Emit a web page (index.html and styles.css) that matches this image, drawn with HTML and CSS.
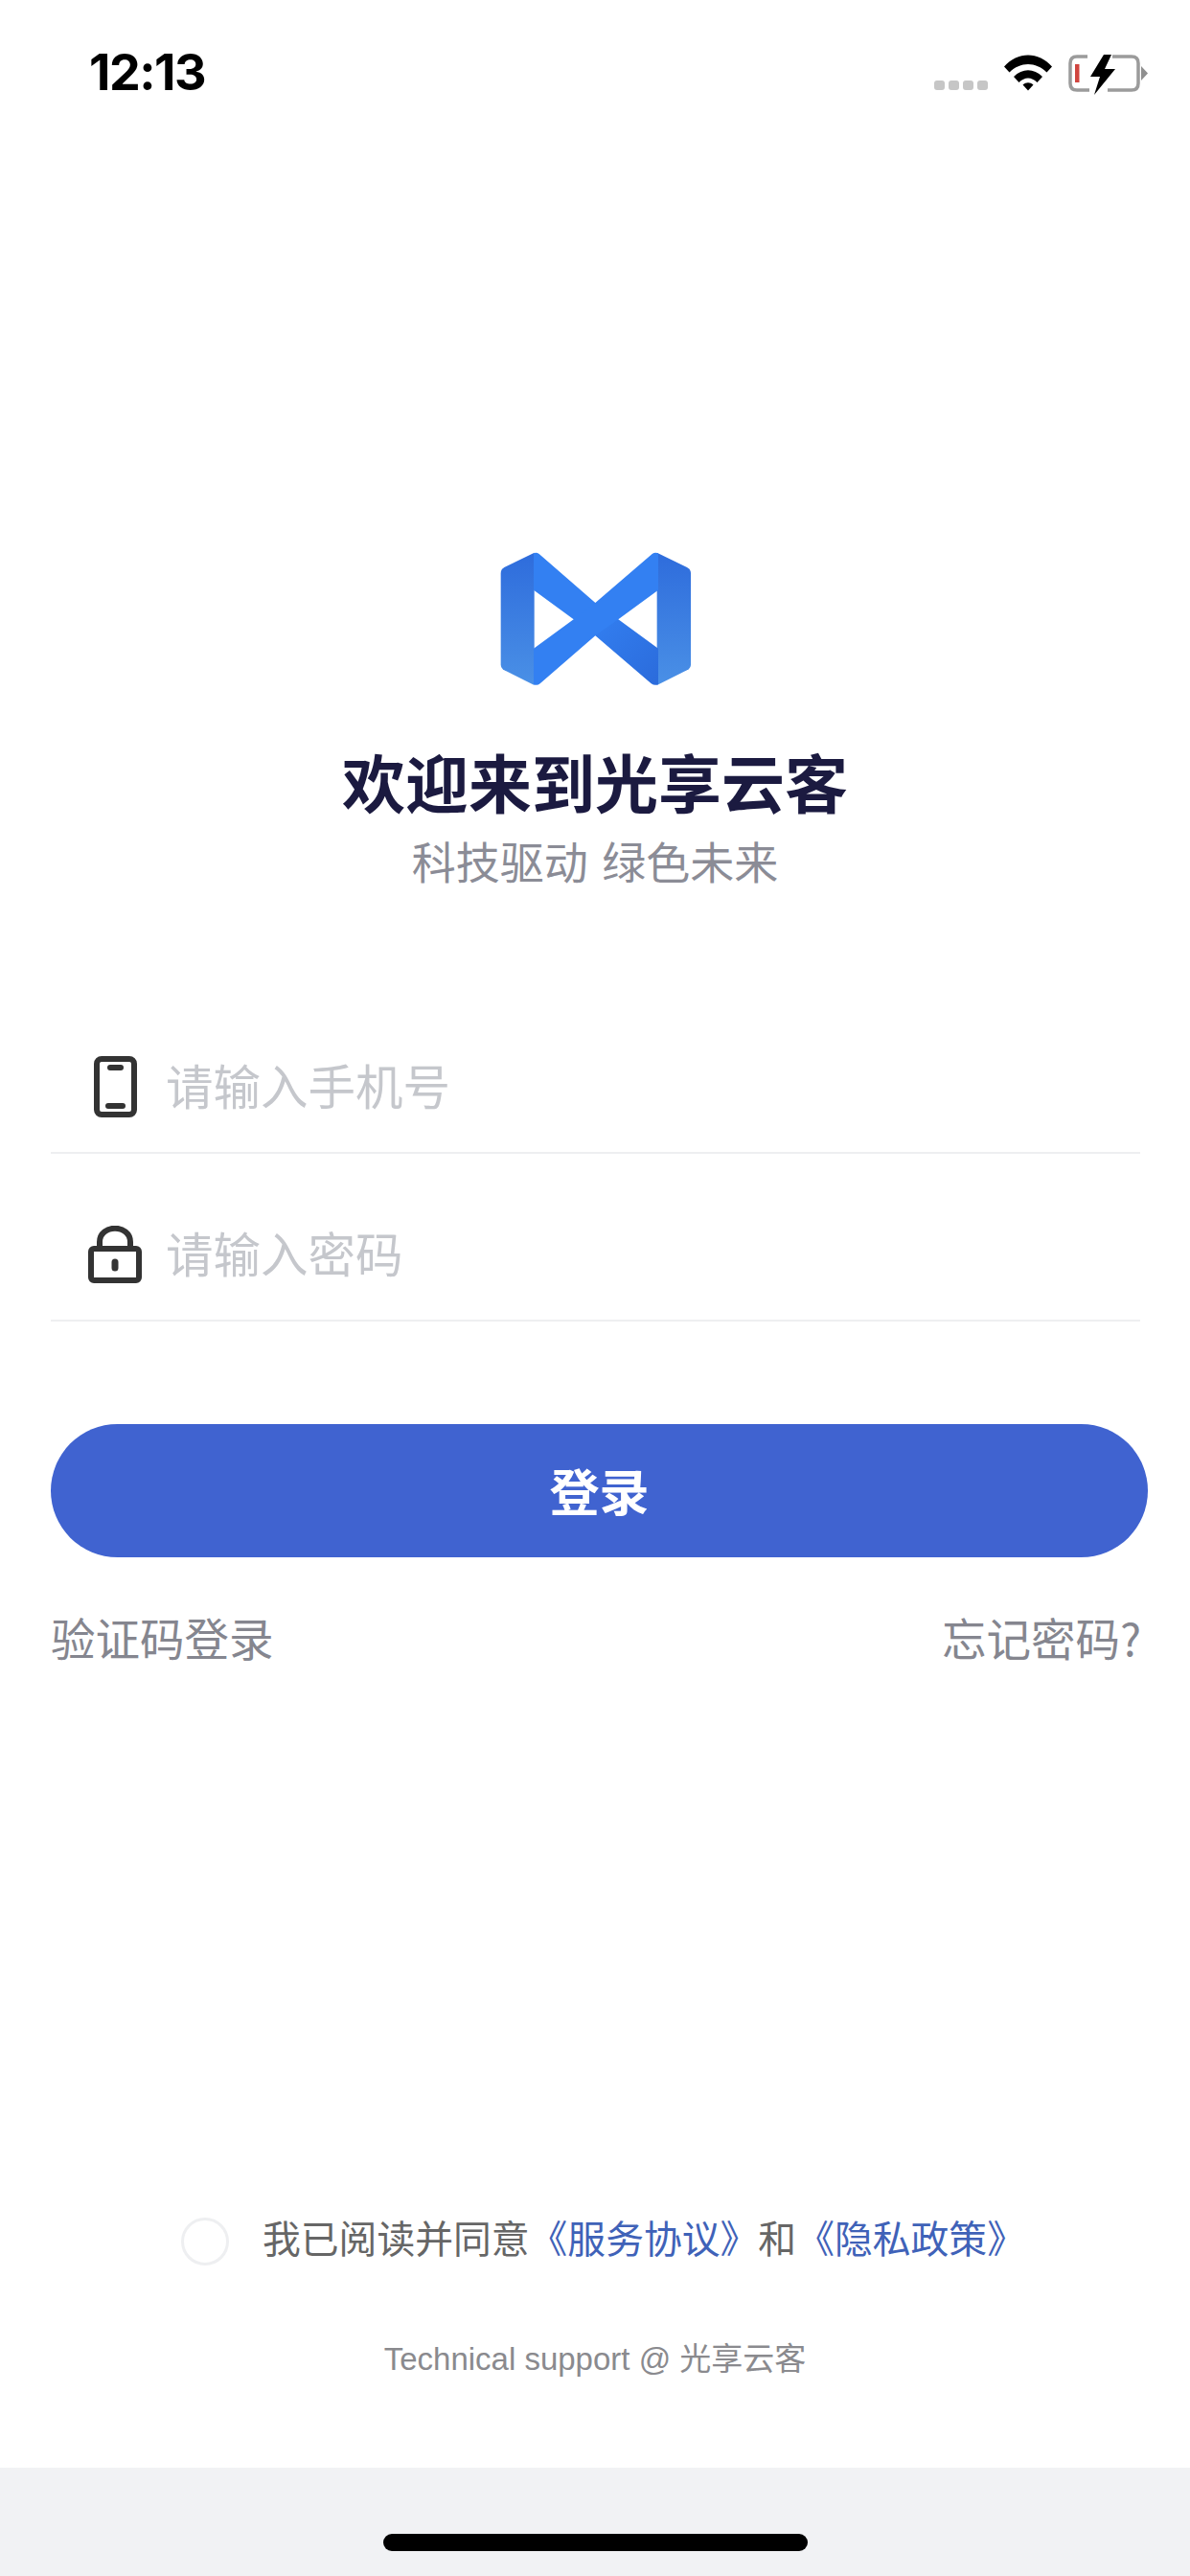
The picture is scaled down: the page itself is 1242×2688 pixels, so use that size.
FILE: index.html
```html
<!DOCTYPE html>
<html lang="zh">
<head>
<meta charset="utf-8">
<title>光享云客</title>
<link rel="stylesheet" href="styles.css">
</head>
<body>
<div class="page">
  <header class="status">
    <span class="time">12:13</span>
    <div class="status-icons">
      <div class="signal"><i></i><i></i><i></i><i></i></div>
      <svg class="wifi" viewBox="0 0 50 38"><path d="M0 12.500C14-3.500 36-3.500 50 12.500L44.500 18.500C33 7 17 7 5.500 18.500Z"/><path d="M10 23C19 14 31 14 40 23L34.500 29C28.500 23 21.500 23 15.500 29Z"/><path d="M19.500 31.500C23 28.500 27 28.500 30.500 31.500L25 37.500Z"/></svg>
      <svg class="battery" viewBox="0 0 84 42"><path class="batt-shell" d="M20 2H9Q2 2 2 9V30Q2 37 9 37H22M46 2H66Q73 2 73 9V30Q73 37 66 37H41"/><path class="batt-nub" d="M76 12L83 19.500L76 27Z"/><rect class="batt-level" x="7" y="10" width="4.500" height="19"/><path class="batt-bolt" d="M37 0L23 23H33L27 42L49 15H38L45 0Z"/></svg>
    </div>
  </header>
  <main class="main">
    <section class="hero">
      <svg class="logo" viewBox="125 76 600 420">
        <defs>
          <linearGradient id="panel" x1="0" y1="0" x2="0" y2="1"><stop offset="0" stop-color="#2e6cdc"/><stop offset="1" stop-color="#4a90e6"/></linearGradient>
          <linearGradient id="band" x1="0" y1="0" x2="1" y2="1"><stop offset="0.45" stop-color="#3380f2"/><stop offset="1" stop-color="#2b6bdb"/></linearGradient>
        </defs>
        <path fill="url(#panel)" d="M232 78L138 124Q127 130 127 142V428Q127 440 138 446L232 493Z"/>
        <path fill="url(#panel)" d="M616 78L710 124Q722 130 722 142V428Q722 440 710 446L616 493Z"/>
        <path fill="url(#band)" d="M230 80Q238 75 247 82L423 235L495 287L620 378V490Q610 496 598 488L423 338L355 287L230 195Z"/>
        <path fill="#3380f2" d="M620 80Q610 75 601 82L423 235L355 287L230 378V490Q240 496 250 488L423 338L495 287L620 195Z"/>
      </svg>
      <h1 class="title">欢迎来到光享云客</h1>
      <p class="subtitle">科技驱动 绿色未来</p>
    </section>
    <form class="form">
      <div class="field">
        <span class="field-icon">
          <svg class="icon-phone" viewBox="0 0 45 64"><rect x="3" y="3" width="39" height="58" rx="5"/><path d="M17 12H28M15 52H30"/></svg>
        </span>
        <span class="placeholder">请输入手机号</span>
      </div>
      <div class="field">
        <span class="field-icon">
          <svg class="icon-lock" viewBox="0 0 56 60"><path d="M12 24V17C12 -2 44 -2 44 17V24"/><rect x="3" y="24" width="50" height="33" rx="3"/><path class="keyhole" d="M28 38V44"/></svg>
        </span>
        <span class="placeholder">请输入密码</span>
      </div>
      <button class="submit" type="button">登录</button>
      <div class="links">
        <span>验证码登录</span>
        <span>忘记密码?</span>
      </div>
    </form>
    <section class="legal">
      <div class="agree">
        <span class="radio"></span>
        <p class="agree-text">我已阅读并同意<a class="link">《服务协议》</a>和<a class="link">《隐私政策》</a></p>
      </div>
      <p class="support">Technical support @ 光享云客</p>
    </section>
  </main>
  <footer class="home-bar"><span class="home-indicator"></span></footer>
</div>
</body>
</html>
```
FILE: styles.css
```css
* { box-sizing: border-box; }
html, body { margin: 0; padding: 0; background: #fff; }
body { font-family: "Liberation Sans", "Noto Sans CJK SC", sans-serif; }
.page { width: 1242px; height: 2688px; display: flex; flex-direction: column; overflow: hidden; background: #fff; }

.status { height: 150px; flex: none; padding: 46px 43px 0 93px; display: flex; justify-content: space-between; align-items: flex-start; }
.time { font-family: Inter, "Liberation Sans", sans-serif; font-size: 52px; font-weight: 700; line-height: 60px; letter-spacing: -1.5px; color: #000; }
.status-icons { display: flex; align-items: flex-start; padding-top: 11px; }
.signal { display: flex; gap: 4px; margin-top: 27px; }
.signal i { width: 11px; height: 10px; border-radius: 3px; background: #c6c6c6; }
.wifi { width: 50px; height: 38px; margin-left: 17px; fill: #000; }
.battery { width: 84px; height: 42px; margin-left: 17px; }
.batt-shell { fill: none; stroke: #9b9b9b; stroke-width: 3.5; }
.batt-nub { fill: #8f8f8f; }
.batt-level { fill: #d0453f; }
.batt-bolt { fill: #000; }

.main { flex: 1; display: flex; flex-direction: column; font-family: "Noto Sans CJK SC", "Liberation Sans", sans-serif; }

.hero { display: flex; flex-direction: column; align-items: center; padding-top: 426px; }
.logo { width: 200px; height: 140px; display: block; margin-left: 2px; }
.title { margin: 58px 0 0; font-size: 66px; line-height: 80px; font-weight: 700; color: #1b1a40; }
.subtitle { margin: 13px 0 0; font-size: 46px; line-height: 60px; font-weight: 400; word-spacing: 4px; color: #8b8c96; }

.form { display: flex; flex-direction: column; padding: 102px 44px 0 53px; }
.field { height: 175px; padding-top: 37px; display: flex; align-items: center; gap: 25px; padding-left: 39px; border-bottom: 2px solid #eeeff1; margin-right: 8px; }
.field-icon { width: 56px; display: flex; justify-content: center; }
.icon-phone { width: 45px; height: 64px; fill: none; stroke: #333; stroke-width: 6; stroke-linecap: round; }
.icon-lock { width: 56px; height: 60px; fill: none; stroke: #333; stroke-width: 6; }
.keyhole { stroke-width: 7; stroke-linecap: round; }
.placeholder { font-size: 49.500px; line-height: 60px; padding-bottom: 5px; color: #c5c7cc; }
.submit { margin-top: 107px; width: 1145px; height: 139px; border: 0; padding: 0 0 2px; border-radius: 70px; background: #4063d0; color: #fff; font-family: inherit; font-size: 52px; font-weight: 700; }
.links { margin-top: 53px; display: flex; justify-content: space-between; font-size: 46.500px; line-height: 60px; color: #85868f; margin-right: 7px; }

.legal { margin-top: auto; display: flex; flex-direction: column; }
.agree { display: flex; align-items: center; gap: 35px; padding-left: 189px; }
.radio { width: 50px; height: 50px; flex: none; border-radius: 50%; border: 3px solid #eeeff1; }
.agree-text { margin: 0; font-size: 39.800px; line-height: 50px; padding-bottom: 10px; color: #666; white-space: nowrap; }
.link { color: #3f62b8; }
.support { margin: 68px 0 88px; text-align: center; font-size: 33px; line-height: 50px; color: #8a8a8e; font-family: "Liberation Sans", "Noto Sans CJK SC", sans-serif; }

.home-bar { height: 113px; flex: none; background: #f1f2f4; display: flex; justify-content: center; padding-top: 69px; }
.home-indicator { width: 443px; height: 18px; border-radius: 9px; background: #000; }
```
